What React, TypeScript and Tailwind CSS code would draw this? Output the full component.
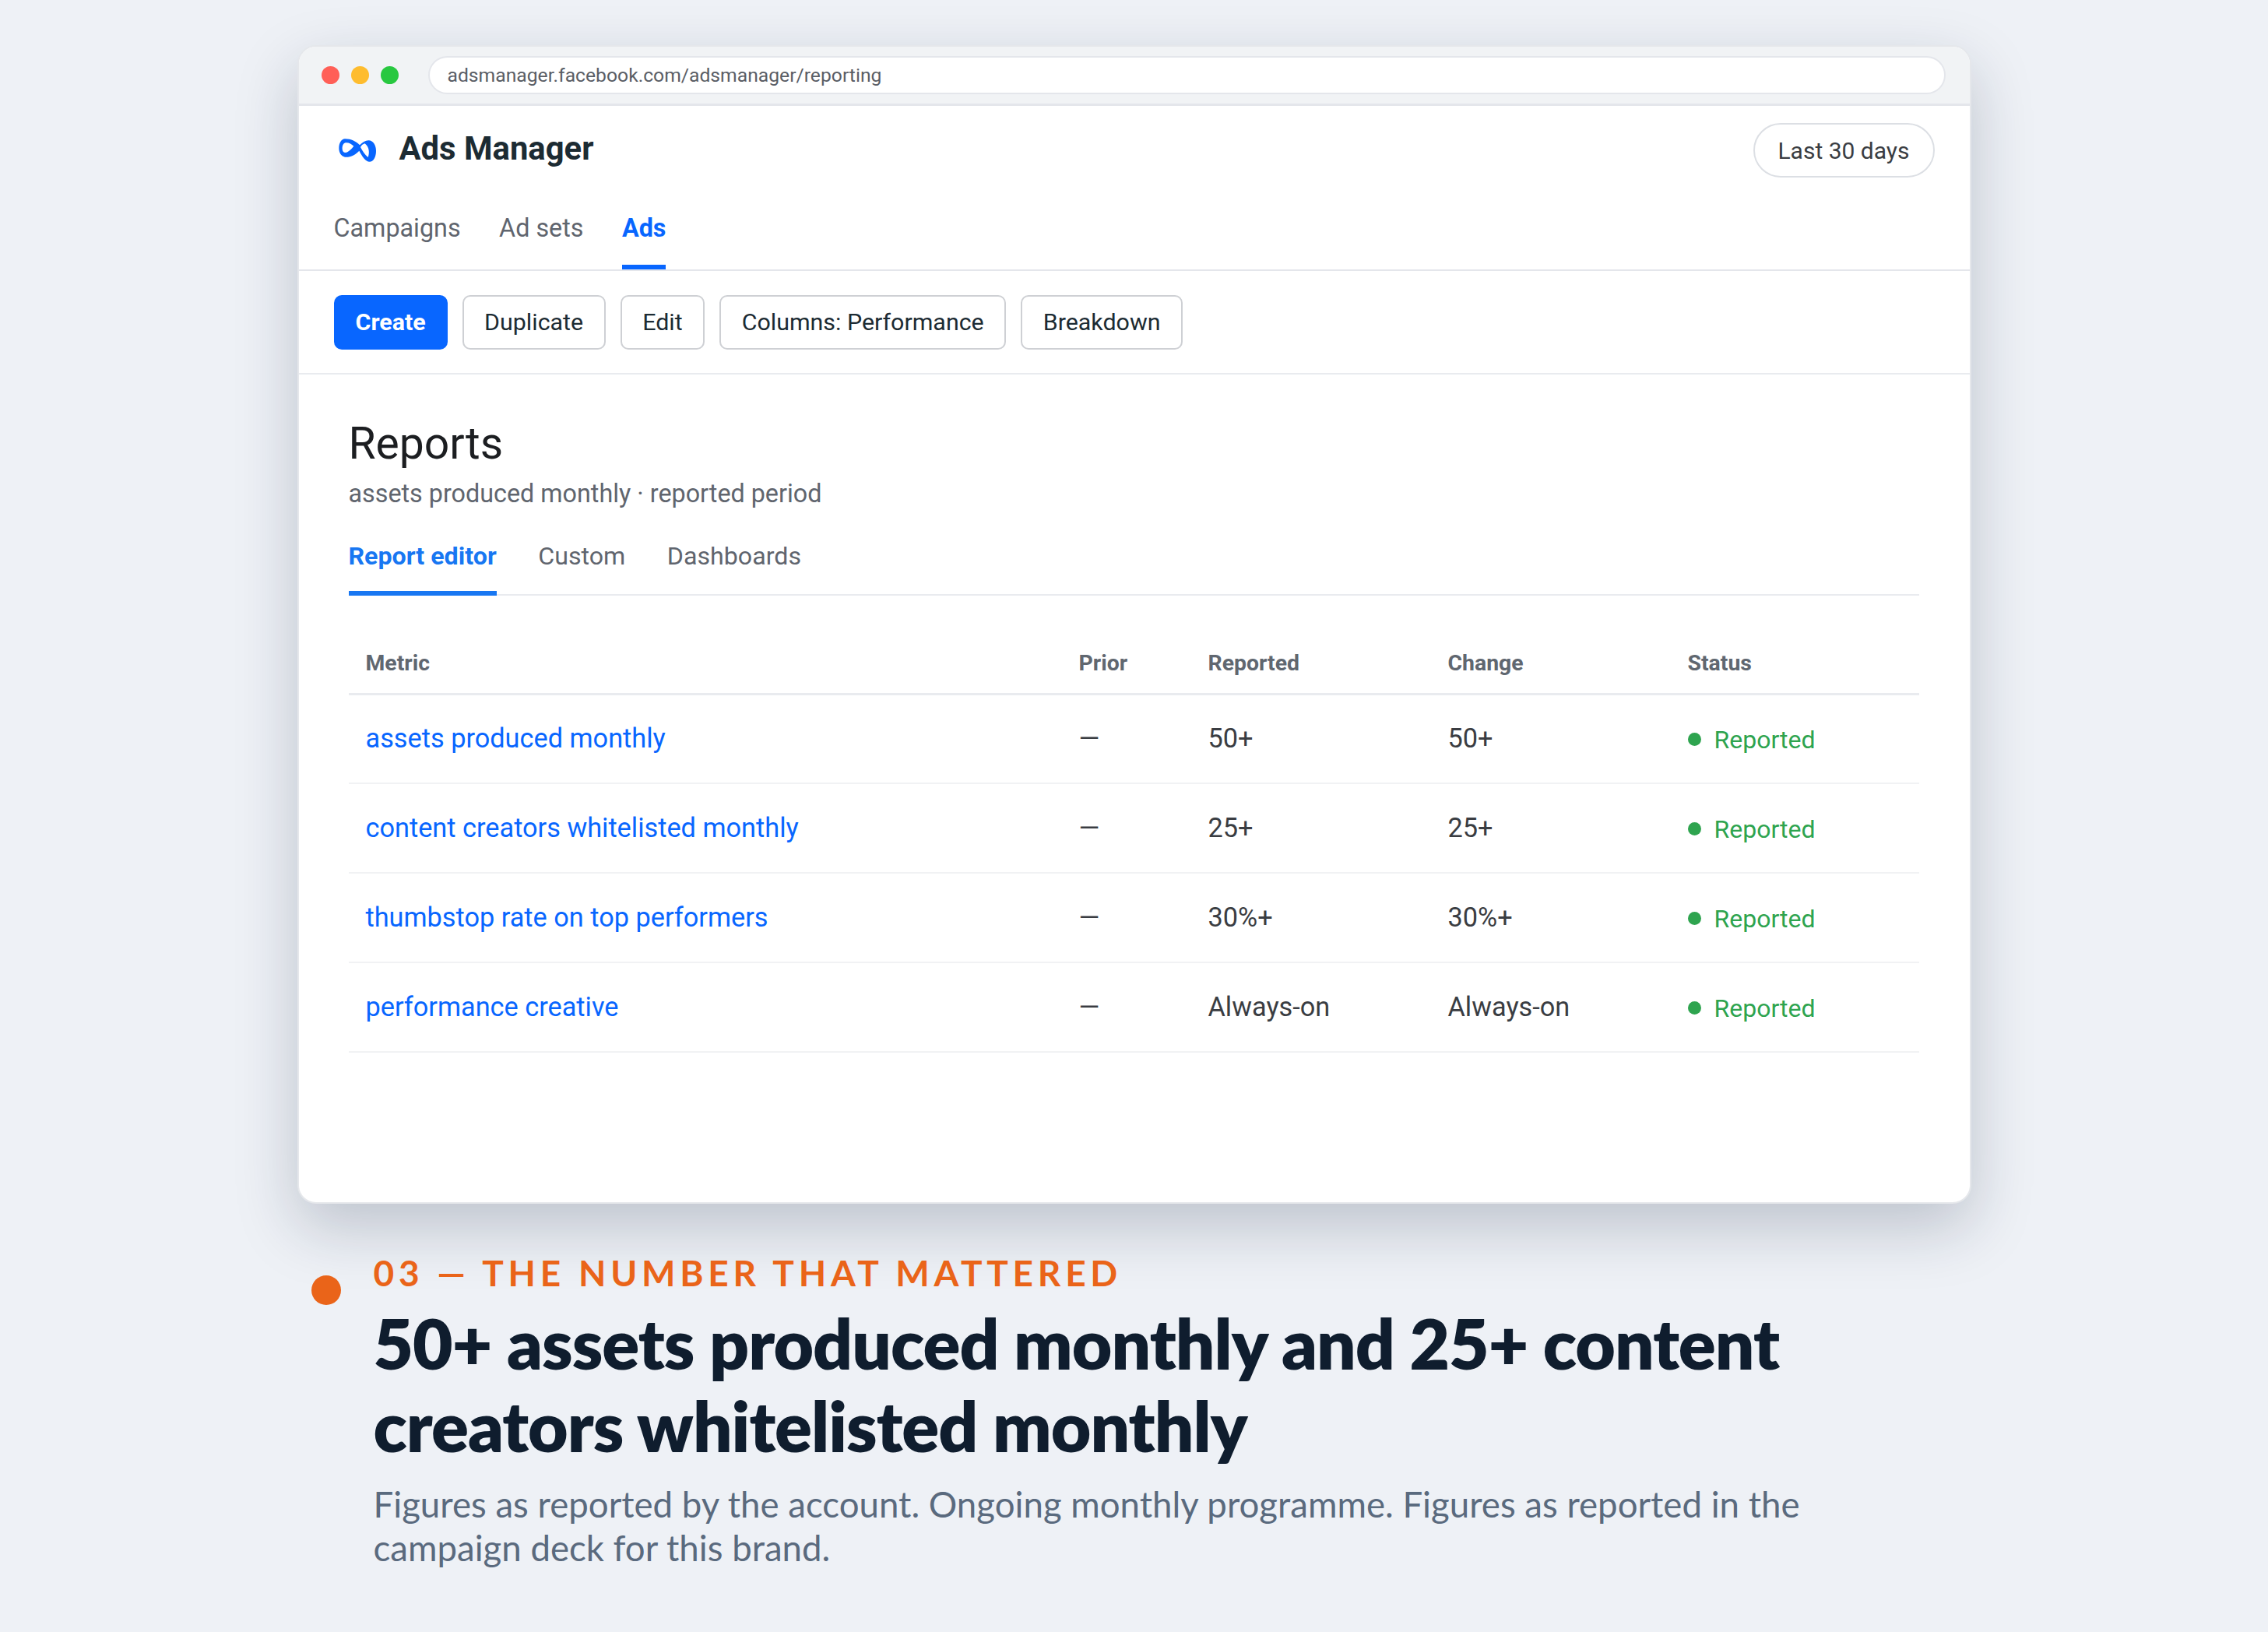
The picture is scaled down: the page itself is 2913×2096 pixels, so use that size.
import React from 'react';

const rows = [
  { metric: 'assets produced monthly', value: '50+' },
  { metric: 'content creators whitelisted monthly', value: '25+' },
  { metric: 'thumbstop rate on top performers', value: '30%+' },
  { metric: 'performance creative', value: 'Always-on' },
];

function MetaLogo() {
  return (
    <svg viewBox="0 0 186 126" className="w-[62px] h-[42px]">
      <path
        fill="#0866ff"
        fillRule="evenodd"
        d="M45 22C70 22 88 32 102 46C112 36 124 28 136 28C155 28 165 48 165 68C165 92 155 110 140 110C124 110 112 90 100 68C88 82 66 94 45 92C30 90 22 74 22 58C22 38 32 22 45 22ZM47 37C38 39 34 50 35 62C36 74 46 79 56 72C66 65 74 57 79 50C70 41 58 35 47 37ZM122 40C114 42 108 48 105 54C112 68 122 84 134 93C140 78 140 54 122 40Z"
      />
    </svg>
  );
}

export default function App() {
  return (
    <div className="w-[2913px] h-[2096px] bg-[#eef1f6] pt-[58px] overflow-hidden font-['Roboto',sans-serif]">
      {/* Browser window */}
      <div className="w-[2150px] h-[1488px] mx-auto bg-white rounded-[24px] border-2 border-[#e5e7eb] overflow-hidden shadow-[0_30px_80px_rgba(20,30,60,0.22)]">
        <div className="h-[76px] bg-[#f1f3f5] border-b-[3px] border-[#e4e6eb] flex items-center pl-[29px] pr-[31px]">
          <div className="flex gap-[15px]">
            <div className="w-[23px] h-[23px] rounded-full bg-[#ff5f57]" />
            <div className="w-[23px] h-[23px] rounded-full bg-[#febc2e]" />
            <div className="w-[23px] h-[23px] rounded-full bg-[#28c840]" />
          </div>
          <div className="ml-[38px] flex-1 h-[49px] rounded-full bg-white border-2 border-[#e4e6eb] flex items-center pl-[23px] text-[24.7px] text-[#5a5e66]">
            adsmanager.facebook.com/adsmanager/reporting
          </div>
        </div>

        {/* App header */}
        <div className="h-[212px] border-b-2 border-[#e4e6eb] pl-[44px] pr-[45px] flex flex-col">
          <div className="h-[114px] shrink-0 flex items-center justify-between">
            <div className="flex items-center pb-[3px]">
              <MetaLogo />
              <span className="ml-[23px] text-[41.8px] font-bold text-[#1c2b33]">Ads Manager</span>
            </div>
            <div className="h-[70px] w-[233px] rounded-full border-2 border-[#dcdfe4] flex items-center justify-center text-[30px] text-[#3a3d42]">
              Last 30 days
            </div>
          </div>
          <div className="flex gap-[49.5px] flex-1 text-[32.3px] text-[#60656e] pl-[1px]">
            <div className="pt-[19px]">Campaigns</div>
            <div className="pt-[19px]">Ad sets</div>
            <div className="pt-[19px] text-[#0866ff] font-bold border-b-[6px] border-[#0866ff]">Ads</div>
          </div>
        </div>

        {/* Toolbar */}
        <div className="h-[133px] border-b-2 border-[#e9ebef] pl-[45px] flex items-center gap-[19px] text-[30.4px] text-[#1c2b33]">
          <button className="h-[70px] px-[28px] rounded-[10px] bg-[#0866ff] text-white font-bold">Create</button>
          <button className="h-[70px] px-[26.5px] rounded-[10px] border-2 border-[#ced0d4] bg-white">Duplicate</button>
          <button className="h-[70px] px-[26.5px] rounded-[10px] border-2 border-[#ced0d4] bg-white">Edit</button>
          <button className="h-[70px] px-[26.5px] rounded-[10px] border-2 border-[#ced0d4] bg-white">Columns: Performance</button>
          <button className="h-[70px] px-[26.5px] rounded-[10px] border-2 border-[#ced0d4] bg-white">Breakdown</button>
        </div>

        {/* Reports */}
        <div className="pl-[64px] pr-[65px] pt-[55px]">
          <h1 className="text-[57px] leading-[68px] text-[#1c1e21]">Reports</h1>
          <p className="mt-[10px] text-[32.3px] leading-[40px] text-[#60656e]">assets produced monthly · reported period</p>
          <div className="mt-[36px] flex gap-[53.5px] text-[32.2px] border-b-2 border-[#e9ebef] text-[#60656e]">
            <div className="h-[75px] -mb-[2px] text-[#1877f2] font-bold border-b-[6px] border-[#1877f2]">Report editor</div>
            <div>Custom</div>
            <div>Dashboards</div>
          </div>

          <table className="mt-[51px] w-full table-fixed border-collapse">
            <colgroup>
              <col className="w-[916px]" />
              <col className="w-[166px]" />
              <col className="w-[308px]" />
              <col className="w-[308px]" />
              <col />
            </colgroup>
            <thead>
              <tr className="h-[75px] border-b-[3px] border-[#e9ebef] text-left text-[28.4px] font-bold text-[#606770]">
                <th className="pl-[22px] font-bold">Metric</th>
                <th className="pl-[22px] font-bold">Prior</th>
                <th className="pl-[22px] font-bold">Reported</th>
                <th className="pl-[22px] font-bold">Change</th>
                <th className="pl-[22px] font-bold">Status</th>
              </tr>
            </thead>
            <tbody>
              {rows.map((row) => (
                <tr key={row.metric} className="h-[115px] border-b-2 border-[#f1f2f4] text-[34.3px] text-[#3a3d42]">
                  <td className="pl-[22px] text-[#0866ff]">{row.metric}</td>
                  <td className="pl-[22px]">—</td>
                  <td className="pl-[22px]">{row.value}</td>
                  <td className="pl-[22px]">{row.value}</td>
                  <td className="pl-[22px]">
                    <div className="flex items-center gap-[17px] pt-[2px] text-[#2ea44f] text-[32px]">
                      <span className="w-[17px] h-[17px] rounded-full bg-[#2ea44f]" />
                      Reported
                    </div>
                  </td>
                </tr>
              ))}
            </tbody>
          </table>
        </div>
      </div>

      {/* Caption */}
      <div className="w-[2150px] mx-auto mt-[61px] pl-[18px] flex font-['Lato',sans-serif]">
        <div className="mt-[31px] w-[38px] h-[38px] shrink-0 rounded-full bg-[#ea6419]" />
        <div className="ml-[42px] w-[1900px]">
          <div className="text-[46px] leading-[56px] font-bold tracking-[5.75px] text-[#ea6419]">03 — THE NUMBER THAT MATTERED</div>
          <h2 className="mt-[9px] text-[89px] leading-[106px] font-extrabold tracking-[-1px] text-[#0f1d2e]">50+ assets produced monthly and 25+ content creators whitelisted monthly</h2>
          <p className="mt-[20px] text-[45.6px] leading-[56px] text-[#5a6a7e]">Figures as reported by the account. Ongoing monthly programme. Figures as reported in the campaign deck for this brand.</p>
        </div>
      </div>
    </div>
  );
}
